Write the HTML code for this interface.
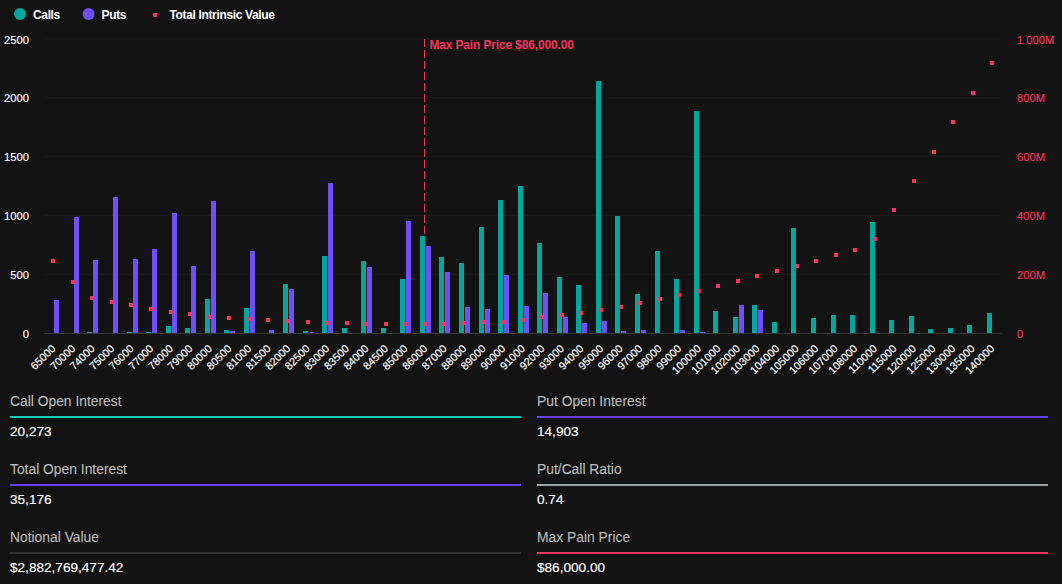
<!DOCTYPE html>
<html><head><meta charset="utf-8">
<style>
html,body{margin:0;padding:0;}
body{width:1062px;height:584px;background:#131313;position:relative;overflow:hidden;font-family:"Liberation Sans",sans-serif;}
svg{position:absolute;left:0;top:0;}
.yl{font-size:11.2px;fill:#ffffff;stroke:#ffffff;stroke-width:0.15px;font-family:"Liberation Sans",sans-serif;}
.yr{font-size:11.2px;fill:#f3355f;stroke:#f3355f;stroke-width:0.15px;font-family:"Liberation Sans",sans-serif;}
.xl{font-size:10.8px;fill:#ffffff;stroke:#ffffff;stroke-width:0.15px;font-family:"Liberation Sans",sans-serif;}
.mp{font-size:12px;font-weight:bold;fill:#f3355f;font-family:"Liberation Sans",sans-serif;letter-spacing:-0.15px;}
.lg{font-size:12px;font-weight:bold;fill:#ffffff;font-family:"Liberation Sans",sans-serif;letter-spacing:-0.35px;}
.lab{position:absolute;font-size:13.85px;line-height:16px;color:#bdbdbd;white-space:nowrap;-webkit-text-stroke:0.1px #bdbdbd;}
.val{position:absolute;font-size:13.6px;line-height:16px;color:#ffffff;white-space:nowrap;-webkit-text-stroke:0.15px #ffffff;}
.line{position:absolute;height:2px;}
</style></head><body>
<svg width="1062" height="584" viewBox="0 0 1062 584">
<circle cx="20" cy="14" r="6" fill="#02a89e"/>
<text x="33" y="18.9" class="lg">Calls</text>
<circle cx="88.6" cy="14" r="6" fill="#6f50f8"/>
<text x="101.5" y="18.9" class="lg">Puts</text>
<rect x="153" y="13" width="4" height="4" fill="#f3355f"/>
<text x="169.5" y="18.9" class="lg">Total Intrinsic Value</text>
<rect x="44.0" y="274.05" width="957.7" height="1" fill="#1c1c1c"/>
<rect x="44.0" y="215.10" width="957.7" height="1" fill="#1c1c1c"/>
<rect x="44.0" y="156.15" width="957.7" height="1" fill="#1c1c1c"/>
<rect x="44.0" y="97.20" width="957.7" height="1" fill="#1c1c1c"/>
<rect x="44.0" y="38.25" width="957.7" height="1" fill="#1c1c1c"/>
<text x="29" y="338.2" text-anchor="end" class="yl">0</text>
<text x="29" y="278.8" text-anchor="end" class="yl">500</text>
<text x="29" y="220.0" text-anchor="end" class="yl">1000</text>
<text x="29" y="161.0" text-anchor="end" class="yl">1500</text>
<text x="29" y="101.9" text-anchor="end" class="yl">2000</text>
<text x="29" y="44.0" text-anchor="end" class="yl">2500</text>
<text x="1017" y="338.2" class="yr">0</text>
<text x="1017" y="278.8" class="yr">200M</text>
<text x="1017" y="220.0" class="yr">400M</text>
<text x="1017" y="161.0" class="yr">600M</text>
<text x="1017" y="101.9" class="yr">800M</text>
<text x="1017" y="44.0" class="yr">1 000M</text>
<line x1="424.5" y1="39.0" x2="424.5" y2="333.0" stroke="#f3355f" stroke-width="1" stroke-dasharray="8 3"/>
<text x="429.4" y="48.8" class="mp">Max Pain Price $86,000.00</text>
<rect x="54" y="300" width="5" height="33.0" fill="#6f50f8"/>
<rect x="74" y="217" width="5" height="116.0" fill="#6f50f8"/>
<rect x="87" y="332" width="5" height="1.0" fill="#02a89e"/>
<rect x="93" y="260" width="5" height="73.0" fill="#6f50f8"/>
<rect x="113" y="197" width="5" height="136.0" fill="#6f50f8"/>
<rect x="127" y="332" width="5" height="1.0" fill="#02a89e"/>
<rect x="133" y="259" width="5" height="74.0" fill="#6f50f8"/>
<rect x="146" y="332" width="5" height="1.0" fill="#02a89e"/>
<rect x="152" y="249" width="5" height="84.0" fill="#6f50f8"/>
<rect x="166" y="326" width="5" height="7.0" fill="#02a89e"/>
<rect x="172" y="213" width="5" height="120.0" fill="#6f50f8"/>
<rect x="185" y="328" width="5" height="5.0" fill="#02a89e"/>
<rect x="191" y="266" width="5" height="67.0" fill="#6f50f8"/>
<rect x="205" y="299" width="5" height="34.0" fill="#02a89e"/>
<rect x="211" y="201" width="5" height="132.0" fill="#6f50f8"/>
<rect x="224" y="330" width="5" height="3.0" fill="#02a89e"/>
<rect x="230" y="331" width="5" height="2.0" fill="#6f50f8"/>
<rect x="244" y="308" width="5" height="25.0" fill="#02a89e"/>
<rect x="250" y="251" width="5" height="82.0" fill="#6f50f8"/>
<rect x="269" y="330" width="5" height="3.0" fill="#6f50f8"/>
<rect x="283" y="284" width="5" height="49.0" fill="#02a89e"/>
<rect x="289" y="289" width="5" height="44.0" fill="#6f50f8"/>
<rect x="303" y="331" width="5" height="2.0" fill="#02a89e"/>
<rect x="309" y="332" width="5" height="1.0" fill="#6f50f8"/>
<rect x="322" y="256" width="5" height="77.0" fill="#02a89e"/>
<rect x="328" y="183" width="5" height="150.0" fill="#6f50f8"/>
<rect x="342" y="328" width="5" height="5.0" fill="#02a89e"/>
<rect x="361" y="261" width="5" height="72.0" fill="#02a89e"/>
<rect x="367" y="267" width="5" height="66.0" fill="#6f50f8"/>
<rect x="381" y="328" width="5" height="5.0" fill="#02a89e"/>
<rect x="400" y="279" width="5" height="54.0" fill="#02a89e"/>
<rect x="406" y="221" width="5" height="112.0" fill="#6f50f8"/>
<rect x="420" y="236" width="5" height="97.0" fill="#02a89e"/>
<rect x="426" y="246" width="5" height="87.0" fill="#6f50f8"/>
<rect x="439" y="257" width="5" height="76.0" fill="#02a89e"/>
<rect x="445" y="272" width="5" height="61.0" fill="#6f50f8"/>
<rect x="459" y="263" width="5" height="70.0" fill="#02a89e"/>
<rect x="465" y="307" width="5" height="26.0" fill="#6f50f8"/>
<rect x="479" y="227" width="5" height="106.0" fill="#02a89e"/>
<rect x="485" y="309" width="5" height="24.0" fill="#6f50f8"/>
<rect x="498" y="200" width="5" height="133.0" fill="#02a89e"/>
<rect x="504" y="275" width="5" height="58.0" fill="#6f50f8"/>
<rect x="518" y="186" width="5" height="147.0" fill="#02a89e"/>
<rect x="524" y="306" width="5" height="27.0" fill="#6f50f8"/>
<rect x="537" y="243" width="5" height="90.0" fill="#02a89e"/>
<rect x="543" y="293" width="5" height="40.0" fill="#6f50f8"/>
<rect x="557" y="277" width="5" height="56.0" fill="#02a89e"/>
<rect x="563" y="317" width="5" height="16.0" fill="#6f50f8"/>
<rect x="576" y="285" width="5" height="48.0" fill="#02a89e"/>
<rect x="582" y="323" width="5" height="10.0" fill="#6f50f8"/>
<rect x="596" y="81" width="5" height="252.0" fill="#02a89e"/>
<rect x="602" y="321" width="5" height="12.0" fill="#6f50f8"/>
<rect x="615" y="216" width="5" height="117.0" fill="#02a89e"/>
<rect x="621" y="331" width="5" height="2.0" fill="#6f50f8"/>
<rect x="635" y="294" width="5" height="39.0" fill="#02a89e"/>
<rect x="641" y="330" width="5" height="3.0" fill="#6f50f8"/>
<rect x="655" y="251" width="5" height="82.0" fill="#02a89e"/>
<rect x="674" y="279" width="5" height="54.0" fill="#02a89e"/>
<rect x="680" y="330" width="5" height="3.0" fill="#6f50f8"/>
<rect x="694" y="111" width="5" height="222.0" fill="#02a89e"/>
<rect x="700" y="332" width="5" height="1.0" fill="#6f50f8"/>
<rect x="713" y="311" width="5" height="22.0" fill="#02a89e"/>
<rect x="733" y="317" width="5" height="16.0" fill="#02a89e"/>
<rect x="739" y="305" width="5" height="28.0" fill="#6f50f8"/>
<rect x="752" y="305" width="5" height="28.0" fill="#02a89e"/>
<rect x="758" y="310" width="5" height="23.0" fill="#6f50f8"/>
<rect x="772" y="322" width="5" height="11.0" fill="#02a89e"/>
<rect x="791" y="228" width="5" height="105.0" fill="#02a89e"/>
<rect x="811" y="318" width="5" height="15.0" fill="#02a89e"/>
<rect x="831" y="315" width="5" height="18.0" fill="#02a89e"/>
<rect x="850" y="315" width="5" height="18.0" fill="#02a89e"/>
<rect x="870" y="222" width="5" height="111.0" fill="#02a89e"/>
<rect x="889" y="320" width="5" height="13.0" fill="#02a89e"/>
<rect x="909" y="316" width="5" height="17.0" fill="#02a89e"/>
<rect x="928" y="329" width="5" height="4.0" fill="#02a89e"/>
<rect x="948" y="328" width="5" height="5.0" fill="#02a89e"/>
<rect x="967" y="325" width="5" height="8.0" fill="#02a89e"/>
<rect x="987" y="313" width="5" height="20.0" fill="#02a89e"/>
<rect x="44.0" y="333.0" width="957.7" height="1" fill="#343434"/>
<rect x="51" y="259" width="4" height="4" fill="#f3355f"/>
<rect x="71" y="280" width="4" height="4" fill="#f3355f"/>
<rect x="90" y="296" width="4" height="4" fill="#f3355f"/>
<rect x="110" y="300" width="4" height="4" fill="#f3355f"/>
<rect x="129" y="303" width="4" height="4" fill="#f3355f"/>
<rect x="149" y="307" width="4" height="4" fill="#f3355f"/>
<rect x="169" y="310" width="4" height="4" fill="#f3355f"/>
<rect x="188" y="312" width="4" height="4" fill="#f3355f"/>
<rect x="208" y="315" width="4" height="4" fill="#f3355f"/>
<rect x="227" y="316" width="4" height="4" fill="#f3355f"/>
<rect x="247" y="317" width="4" height="4" fill="#f3355f"/>
<rect x="266" y="318" width="4" height="4" fill="#f3355f"/>
<rect x="286" y="319" width="4" height="4" fill="#f3355f"/>
<rect x="306" y="320" width="4" height="4" fill="#f3355f"/>
<rect x="325" y="321" width="4" height="4" fill="#f3355f"/>
<rect x="345" y="321" width="4" height="4" fill="#f3355f"/>
<rect x="364" y="322" width="4" height="4" fill="#f3355f"/>
<rect x="384" y="322" width="4" height="4" fill="#f3355f"/>
<rect x="403" y="322" width="4" height="4" fill="#f3355f"/>
<rect x="423" y="322" width="4" height="4" fill="#f3355f"/>
<rect x="442" y="322" width="4" height="4" fill="#f3355f"/>
<rect x="462" y="321" width="4" height="4" fill="#f3355f"/>
<rect x="482" y="320" width="4" height="4" fill="#f3355f"/>
<rect x="501" y="320" width="4" height="4" fill="#f3355f"/>
<rect x="521" y="318" width="4" height="4" fill="#f3355f"/>
<rect x="540" y="315" width="4" height="4" fill="#f3355f"/>
<rect x="560" y="313" width="4" height="4" fill="#f3355f"/>
<rect x="579" y="311" width="4" height="4" fill="#f3355f"/>
<rect x="599" y="308" width="4" height="4" fill="#f3355f"/>
<rect x="619" y="305" width="4" height="4" fill="#f3355f"/>
<rect x="638" y="301" width="4" height="4" fill="#f3355f"/>
<rect x="658" y="297" width="4" height="4" fill="#f3355f"/>
<rect x="677" y="293" width="4" height="4" fill="#f3355f"/>
<rect x="697" y="289" width="4" height="4" fill="#f3355f"/>
<rect x="716" y="284" width="4" height="4" fill="#f3355f"/>
<rect x="736" y="279" width="4" height="4" fill="#f3355f"/>
<rect x="755" y="274" width="4" height="4" fill="#f3355f"/>
<rect x="775" y="269" width="4" height="4" fill="#f3355f"/>
<rect x="795" y="264" width="4" height="4" fill="#f3355f"/>
<rect x="814" y="259" width="4" height="4" fill="#f3355f"/>
<rect x="834" y="253" width="4" height="4" fill="#f3355f"/>
<rect x="853" y="248" width="4" height="4" fill="#f3355f"/>
<rect x="873" y="237" width="4" height="4" fill="#f3355f"/>
<rect x="892" y="208" width="4" height="4" fill="#f3355f"/>
<rect x="912" y="179" width="4" height="4" fill="#f3355f"/>
<rect x="932" y="150" width="4" height="4" fill="#f3355f"/>
<rect x="951" y="120" width="4" height="4" fill="#f3355f"/>
<rect x="971" y="91" width="4" height="4" fill="#f3355f"/>
<rect x="990" y="61" width="4" height="4" fill="#f3355f"/>
<text transform="translate(56.35,349.20) rotate(-45)" text-anchor="end" class="xl">65000</text>
<text transform="translate(75.91,349.20) rotate(-45)" text-anchor="end" class="xl">70000</text>
<text transform="translate(95.46,349.20) rotate(-45)" text-anchor="end" class="xl">74000</text>
<text transform="translate(115.01,349.20) rotate(-45)" text-anchor="end" class="xl">75000</text>
<text transform="translate(134.57,349.20) rotate(-45)" text-anchor="end" class="xl">76000</text>
<text transform="translate(154.12,349.20) rotate(-45)" text-anchor="end" class="xl">77000</text>
<text transform="translate(173.68,349.20) rotate(-45)" text-anchor="end" class="xl">78000</text>
<text transform="translate(193.23,349.20) rotate(-45)" text-anchor="end" class="xl">79000</text>
<text transform="translate(212.79,349.20) rotate(-45)" text-anchor="end" class="xl">80000</text>
<text transform="translate(232.34,349.20) rotate(-45)" text-anchor="end" class="xl">80500</text>
<text transform="translate(251.90,349.20) rotate(-45)" text-anchor="end" class="xl">81000</text>
<text transform="translate(271.46,349.20) rotate(-45)" text-anchor="end" class="xl">81500</text>
<text transform="translate(291.01,349.20) rotate(-45)" text-anchor="end" class="xl">82000</text>
<text transform="translate(310.57,349.20) rotate(-45)" text-anchor="end" class="xl">82500</text>
<text transform="translate(330.12,349.20) rotate(-45)" text-anchor="end" class="xl">83000</text>
<text transform="translate(349.68,349.20) rotate(-45)" text-anchor="end" class="xl">83500</text>
<text transform="translate(369.23,349.20) rotate(-45)" text-anchor="end" class="xl">84000</text>
<text transform="translate(388.79,349.20) rotate(-45)" text-anchor="end" class="xl">84500</text>
<text transform="translate(408.34,349.20) rotate(-45)" text-anchor="end" class="xl">85000</text>
<text transform="translate(427.90,349.20) rotate(-45)" text-anchor="end" class="xl">86000</text>
<text transform="translate(447.45,349.20) rotate(-45)" text-anchor="end" class="xl">87000</text>
<text transform="translate(467.00,349.20) rotate(-45)" text-anchor="end" class="xl">88000</text>
<text transform="translate(486.56,349.20) rotate(-45)" text-anchor="end" class="xl">89000</text>
<text transform="translate(506.12,349.20) rotate(-45)" text-anchor="end" class="xl">90000</text>
<text transform="translate(525.67,349.20) rotate(-45)" text-anchor="end" class="xl">91000</text>
<text transform="translate(545.23,349.20) rotate(-45)" text-anchor="end" class="xl">92000</text>
<text transform="translate(564.78,349.20) rotate(-45)" text-anchor="end" class="xl">93000</text>
<text transform="translate(584.34,349.20) rotate(-45)" text-anchor="end" class="xl">94000</text>
<text transform="translate(603.89,349.20) rotate(-45)" text-anchor="end" class="xl">95000</text>
<text transform="translate(623.45,349.20) rotate(-45)" text-anchor="end" class="xl">96000</text>
<text transform="translate(643.00,349.20) rotate(-45)" text-anchor="end" class="xl">97000</text>
<text transform="translate(662.56,349.20) rotate(-45)" text-anchor="end" class="xl">98000</text>
<text transform="translate(682.11,349.20) rotate(-45)" text-anchor="end" class="xl">99000</text>
<text transform="translate(701.66,349.20) rotate(-45)" text-anchor="end" class="xl">100000</text>
<text transform="translate(721.22,349.20) rotate(-45)" text-anchor="end" class="xl">101000</text>
<text transform="translate(740.77,349.20) rotate(-45)" text-anchor="end" class="xl">102000</text>
<text transform="translate(760.33,349.20) rotate(-45)" text-anchor="end" class="xl">103000</text>
<text transform="translate(779.88,349.20) rotate(-45)" text-anchor="end" class="xl">104000</text>
<text transform="translate(799.44,349.20) rotate(-45)" text-anchor="end" class="xl">105000</text>
<text transform="translate(819.00,349.20) rotate(-45)" text-anchor="end" class="xl">106000</text>
<text transform="translate(838.55,349.20) rotate(-45)" text-anchor="end" class="xl">107000</text>
<text transform="translate(858.11,349.20) rotate(-45)" text-anchor="end" class="xl">108000</text>
<text transform="translate(877.66,349.20) rotate(-45)" text-anchor="end" class="xl">110000</text>
<text transform="translate(897.22,349.20) rotate(-45)" text-anchor="end" class="xl">115000</text>
<text transform="translate(916.77,349.20) rotate(-45)" text-anchor="end" class="xl">120000</text>
<text transform="translate(936.33,349.20) rotate(-45)" text-anchor="end" class="xl">125000</text>
<text transform="translate(955.88,349.20) rotate(-45)" text-anchor="end" class="xl">130000</text>
<text transform="translate(975.44,349.20) rotate(-45)" text-anchor="end" class="xl">135000</text>
<text transform="translate(994.99,349.20) rotate(-45)" text-anchor="end" class="xl">140000</text>
</svg>
<div class="lab" style="left:10px;top:392.95px">Call Open Interest</div>
<div class="line" style="left:10px;top:416px;width:511px;background:#00cfbb"></div>
<div class="val" style="left:10px;top:423.90px">20,273</div>
<div class="lab" style="left:537px;top:392.95px">Put Open Interest</div>
<div class="line" style="left:537px;top:416px;width:511px;background:#6442f2"></div>
<div class="val" style="left:537px;top:423.90px">14,903</div>
<div class="lab" style="left:10px;top:460.95px">Total Open Interest</div>
<div class="line" style="left:10px;top:484px;width:511px;background:#6442f2"></div>
<div class="val" style="left:10px;top:491.90px">35,176</div>
<div class="lab" style="left:537px;top:460.95px">Put/Call Ratio</div>
<div class="line" style="left:537px;top:484px;width:511px;background:#9aa2a4"></div>
<div class="val" style="left:537px;top:491.90px">0.74</div>
<div class="lab" style="left:10px;top:528.95px">Notional Value</div>
<div class="line" style="left:10px;top:552px;width:511px;background:#2f3133"></div>
<div class="val" style="left:10px;top:559.90px">$2,882,769,477.42</div>
<div class="lab" style="left:537px;top:528.95px">Max Pain Price</div>
<div class="line" style="left:537px;top:552px;width:511px;background:#f3355f"></div>
<div class="val" style="left:537px;top:559.90px">$86,000.00</div>
</body></html>
